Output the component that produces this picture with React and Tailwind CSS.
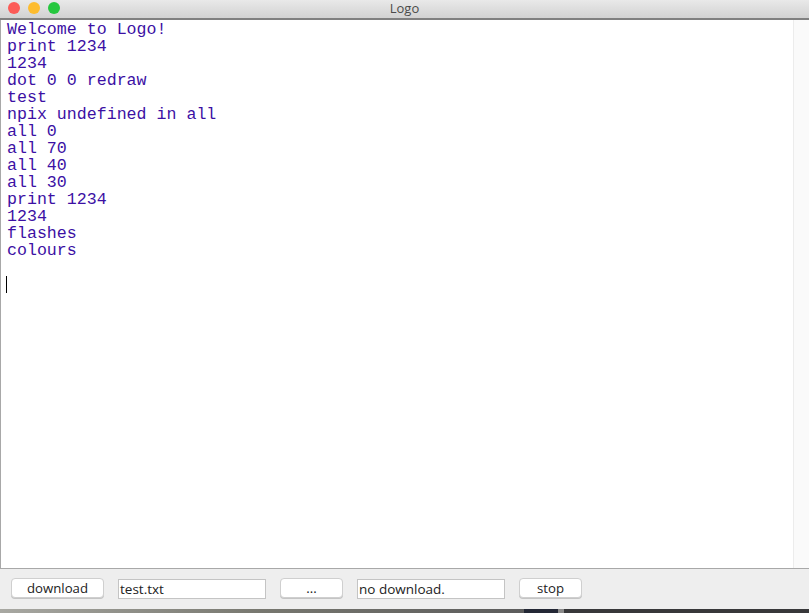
const lines = [
  "Welcome to Logo!",
  "print 1234",
  "1234",
  "dot 0 0 redraw",
  "test",
  "npix undefined in all",
  "all 0",
  "all 70",
  "all 40",
  "all 30",
  "print 1234",
  "1234",
  "flashes",
  "colours",
];

function Light({ color }) {
  return <span className={`block w-3 h-3 rounded-full ${color}`} />;
}

function Button({ width, children }) {
  return (
    <button className={`${width} h-[20px] pt-[2px] shrink-0 bg-white border border-[#cfcfcf] rounded-[4px] text-[13.2px] leading-none text-[#222] shadow-[0_1px_0_#c4c4c4]`}>
      {children}
    </button>
  );
}

function Field({ children }) {
  return (
    <div className="w-[148px] h-[20px] mt-[1px] shrink-0 bg-white border border-[#c4c4c4] pl-[1px] text-[13.5px] leading-[18px] text-[#222]">
      {children}
    </div>
  );
}

export default function App() {
  return (
    <div className="w-[809px] h-[613px] flex flex-col overflow-hidden bg-[#eeeeee] font-['Open_Sans','Liberation_Sans',sans-serif]">
      <div className="relative h-[20px] flex items-center shrink-0 pl-[8px] pb-[3px] gap-[8px] bg-gradient-to-b from-[#e9e9e9] to-[#d2d2d2] border-b-2 border-[#808080]">
        <Light color="bg-[#fc5b57]" />
        <Light color="bg-[#fdbc2f]" />
        <Light color="bg-[#26c73f]" />
        <span className="absolute inset-x-0 top-0 text-center text-[13px] leading-[17px] text-[#4a4a4a]">Logo</span>
      </div>

      <div className="flex h-[549px] shrink-0 border-l border-b border-[#a8a8a8] bg-white">
        <div className="flex-1 pt-[1px] pl-[6px] font-['Liberation_Mono',monospace] text-[16.63px] leading-[17px] text-[#3c10a4]">
          {lines.map((line, i) => (
            <div key={i} className="h-[17px] whitespace-pre">{line}</div>
          ))}
          <div className="mt-[17px] -ml-px h-[17px] w-px bg-black" />
        </div>
        <div className="w-[16px] border-l border-[#ececec] bg-[#fafafa]" />
      </div>

      <div className="flex h-[40px] shrink-0 items-start gap-[14px] pt-[9px] pl-[11px]">
        <Button width="w-[93px]">download</Button>
        <Field>test.txt</Field>
        <Button width="w-[63px]">...</Button>
        <Field>no download.</Field>
        <Button width="w-[63px]">stop</Button>
      </div>

      <div className="flex flex-1 bg-[#38383a]">
        <div className="w-[524px] bg-gradient-to-r from-[#a8a8a2] via-[#77776f] to-[#5c5c5c]" />
        <div className="w-[34px] bg-[#232735]" />
        <div className="w-[6px] bg-[#8a8a8a]" />
      </div>
    </div>
  );
}
